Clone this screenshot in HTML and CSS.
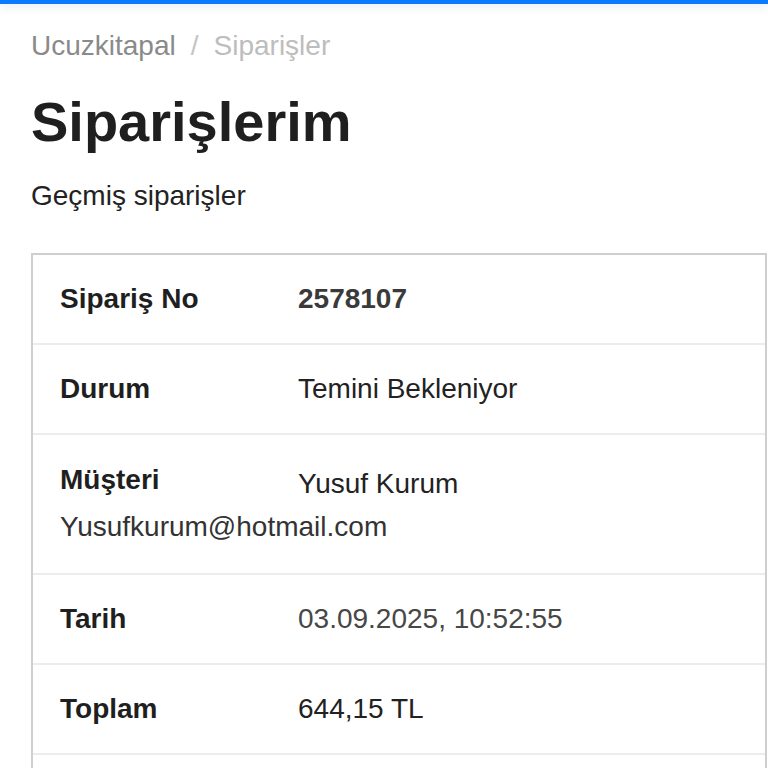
FILE: index.html
```html
<!DOCTYPE html>
<html lang="tr">
<head>
<meta charset="utf-8">
<title>Siparişlerim</title>
<link rel="stylesheet" href="styles.css">
</head>
<body>
<div class="topbar"></div>
<main class="page">
  <nav class="crumbs"><span class="crumb-home">Ucuzkitapal</span><span class="crumb-sep">/</span><span class="crumb-current">Siparişler</span></nav>
  <h1 class="title">Siparişlerim</h1>
  <p class="subtitle">Geçmiş siparişler</p>
  <section class="order">
    <div class="row">
      <div class="label">Sipariş No</div>
      <div class="value strong">2578107</div>
    </div>
    <div class="row">
      <div class="label">Durum</div>
      <div class="value">Temini Bekleniyor</div>
    </div>
    <div class="row wrap">
      <div class="label">Müşteri</div>
      <div class="value low">Yusuf Kurum</div>
      <div class="email">Yusufkurum@hotmail.com</div>
    </div>
    <div class="row">
      <div class="label">Tarih</div>
      <div class="value muted">03.09.2025, 10:52:55</div>
    </div>
    <div class="row">
      <div class="label">Toplam</div>
      <div class="value">644,15 TL</div>
    </div>
    <div class="row">
      <div class="label">&nbsp;</div>
      <div class="value">&nbsp;</div>
    </div>
  </section>
</main>
</body>
</html>
```

FILE: styles.css
```css
html, body {
  margin: 0;
  padding: 0;
  background: #fff;
  font-family: "Liberation Sans", Arial, sans-serif;
  color: #222;
  overflow: hidden;
}

.topbar {
  height: 4px;
  background: #0a7bff;
  box-shadow: 0 2px 10px rgba(180, 190, 210, 0.45);
}

.page {
  padding: 22px 0 0 31px;
}

.crumbs {
  font-size: 28px;
  line-height: 40px;
  display: flex;
  align-items: baseline;
}

.crumb-home {
  color: #8a8a8a;
}

.crumb-sep {
  color: #c4c4c4;
  margin: 0 15px 0 15px;
}

.crumb-current {
  color: #bdbdbd;
}

.title {
  margin: 21px 0 0;
  font-size: 56px;
  line-height: 70px;
  font-weight: bold;
  color: #1f1f1f;
  letter-spacing: 0;
}

.subtitle {
  margin: 21px 0 0;
  font-size: 28px;
  line-height: 36px;
  color: #222;
}

.order {
  margin-top: 39px;
  width: 732px;
  border: 2px solid #cfcfcf;
}

.row {
  display: flex;
  flex-wrap: wrap;
  padding: 23px 0 23px 27px;
  border-bottom: 2px solid #ececec;
  font-size: 28px;
  line-height: 42px;
}

.label {
  width: 238px;
  font-weight: bold;
  color: #1f1f1f;
}

.value {
  color: #222;
}

.value.strong {
  font-weight: bold;
  color: #3a3a3a;
}

.value.muted {
  color: #474747;
}

.value.low {
  padding-top: 4px;
}

.email {
  width: 100%;
  color: #333;
  margin-top: 1px;
}

.row.wrap {
  padding-top: 24px;
  padding-bottom: 25px;
}
```
